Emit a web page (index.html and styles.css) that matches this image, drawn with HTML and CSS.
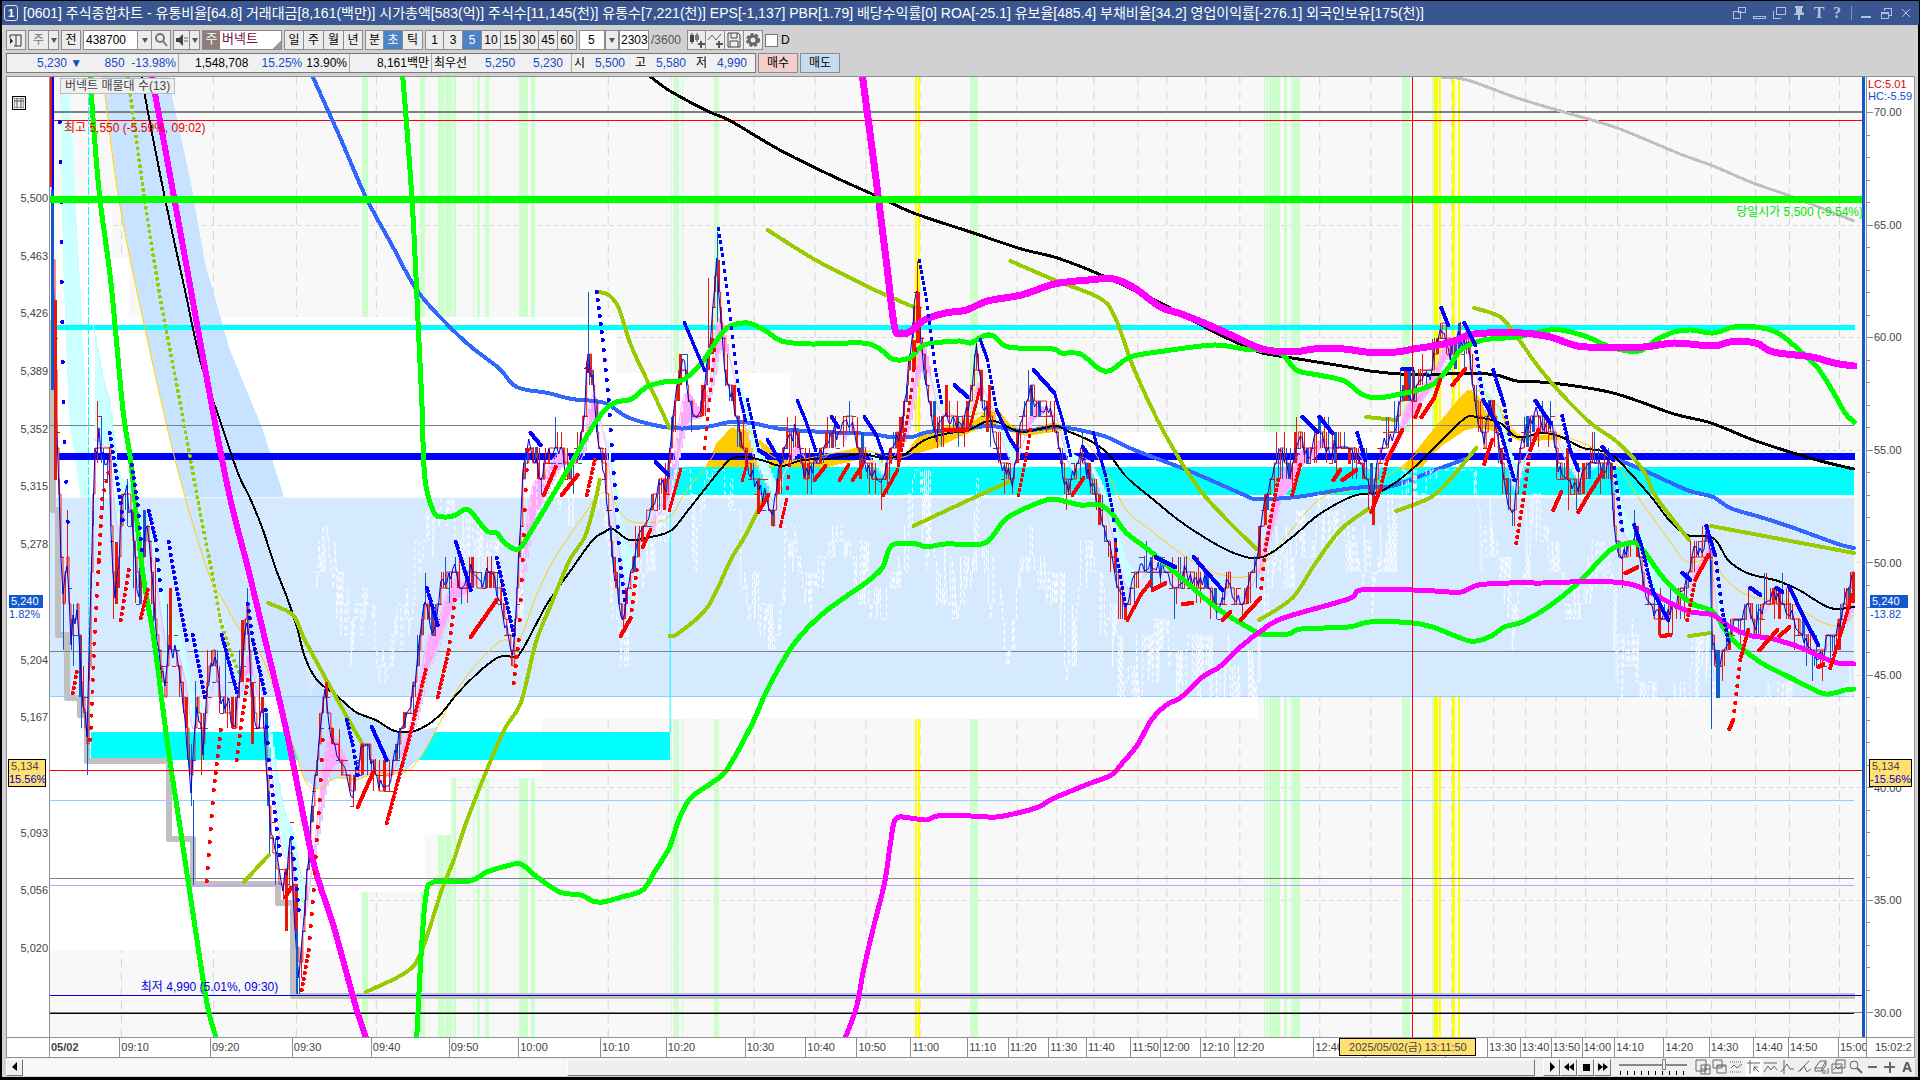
FILE: index.html
```
<!DOCTYPE html>
<html lang="ko">
<head>
    <meta charset="UTF-8">
    <meta name="viewport" content="width=device-width, initial-scale=1.0">
    <title>[0601] 주식종합차트</title>
    <link rel="stylesheet" href="styles.css">
</head>
<body>
    <header class="titlebar">
        <span class="win-no">1</span>
        <h1>[0601] 주식종합차트 - 유통비율[64.8] 거래대금[8,161(백만)] 시가총액[583(억)] 주식수[11,145(천)] 유통수[7,221(천)] EPS[-1,137] PBR[1.79] 배당수익률[0] ROA[-25.1] 유보율[485.4] 부채비율[34.2] 영업이익률[-276.1] 외국인보유[175(천)]</h1>
        <div class="win-buttons">
            <button type="button" aria-label="분리"><svg width="14" height="14"><path d="M1 5h7v7H1zM6 1h7v5H6z"/></svg></button>
            <button type="button" aria-label="접기"><svg width="14" height="14"><path d="M1 10h12v2H1z"/></svg></button>
            <button type="button" aria-label="복사"><svg width="14" height="14"><path d="M4 1h9v7H4zM1 5v7h8"/></svg></button>
            <button type="button" aria-label="고정"><svg width="14" height="14"><path class="solid" d="M3 0h8v2H10v4l2 2v1H2V8l2-2V2H3zM6 9h2v5H6z"/></svg></button>
            <button type="button" class="letter">T</button>
            <button type="button" class="letter">?</button>
            <i class="bar"></i>
            <button type="button" aria-label="최소화"><svg width="14" height="14"><path d="M2 10h10M2 11h10"/></svg></button>
            <button type="button" aria-label="이전 크기"><svg width="14" height="14"><path d="M2 6h7v6H2zM5 5V2h7v7H9M2 7h7"/></svg></button>
            <button type="button" aria-label="닫기"><svg width="14" height="14"><path d="M3 3l8 8M11 3l-8 8"/></svg></button>
        </div>
    </header>

    <main class="window">
        <div class="toolbar">
            <button type="button" class="btn w20" aria-label="패널"><svg width="14" height="14"><path d="M1 5l3 3-3 3z" fill="#222"/><path d="M1 2h11v11H5M7 2v11M1 2v3" fill="none" stroke="#333"/></svg></button>
            <div class="group">
                <button type="button" class="btn w21 gray">주</button>
                <button type="button" class="btn w10 arrow" aria-label="종류"></button>
            </div>
            <button type="button" class="btn w20">전</button>
            <div class="group">
                <input class="code" type="text" value="438700" aria-label="종목코드">
                <button type="button" class="btn w14 arrow" aria-label="최근 종목"></button>
                <button type="button" class="btn w19" aria-label="검색"><svg width="14" height="14"><circle cx="6" cy="5" r="4" fill="none" stroke="#777" stroke-width="2"/><path d="M9 8l4 5" stroke="#777" stroke-width="2"/></svg></button>
            </div>
            <div class="group">
                <button type="button" class="btn w17" aria-label="소리"><svg width="14" height="14"><path d="M1 5h3l4-4v12L4 9H1z" fill="#444"/><path d="M10 4v6M12 4v6" stroke="#666" stroke-dasharray="2 1"/></svg></button>
                <button type="button" class="btn w10 arrow" aria-label="소리 설정"></button>
            </div>
            <div class="stock"><b>주</b><span>버넥트</span></div>
            <div class="group">
                <button type="button" class="btn w20">일</button>
                <button type="button" class="btn w20">주</button>
                <button type="button" class="btn w20">월</button>
                <button type="button" class="btn w19">년</button>
            </div>
            <div class="group">
                <button type="button" class="btn w19">분</button>
                <button type="button" class="btn w19 on">초</button>
                <button type="button" class="btn w20">틱</button>
            </div>
            <div class="group">
                <button type="button" class="btn w19">1</button>
                <button type="button" class="btn w19">3</button>
                <button type="button" class="btn w19 on">5</button>
                <button type="button" class="btn w19">10</button>
                <button type="button" class="btn w19">15</button>
                <button type="button" class="btn w19">30</button>
                <button type="button" class="btn w19">45</button>
                <button type="button" class="btn w19">60</button>
            </div>
            <div class="group unit-box">
                <select class="unit" aria-label="주기"><option>5</option></select>
                <span class="btn w14 arrow"></span>
            </div>
            <input class="count" type="text" value="2303" aria-label="봉 개수">
            <span class="total">/3600</span>
            <div class="group">
                <button type="button" class="btn w19" aria-label="지표 추가"><svg width="16" height="16"><path d="M3 1v11M8 1v9" stroke="#444"/><path d="M1 3h4v7H1z" fill="#444"/><path d="M6 3h4v5H6z" fill="#777"/><path d="M12 9v7M9 12h7" stroke="#555" stroke-width="2"/></svg></button>
                <button type="button" class="btn w19" aria-label="선 추가"><svg width="16" height="16"><path d="M1 8l4-5 4 5 5-6" fill="none" stroke="#666"/><path d="M12 9v7M9 12h7" stroke="#555" stroke-width="2"/></svg></button>
                <button type="button" class="btn w19" aria-label="저장"><svg width="16" height="16"><path d="M2 1h10l2 2v12H2zM5 1v5h6V1M4 15V9h8v6" fill="none" stroke="#444"/></svg></button>
                <button type="button" class="btn w19" aria-label="설정"><svg width="16" height="16"><circle cx="8" cy="8" r="4" fill="none" stroke="#666" stroke-width="3"/><circle cx="8" cy="8" r="6" fill="none" stroke="#666" stroke-width="2" stroke-dasharray="3 2"/></svg></button>
            </div>
            <label class="chk"><input type="checkbox">D</label>
        </div>

        <div class="quote">
            <dl class="quote-box">
                <dd class="blue c1"><span>5,230 ▼</span><span>850&nbsp; -13.98%</span></dd>
                <dd class="c2"><span>1,548,708</span><span class="pair"><span class="blue">15.25%</span><span>13.90%</span></span></dd>
                <dd class="c3">8,161백만</dd>
                <dd class="c4"><span>최우선</span><span class="blue">5,250</span><span class="blue">5,230</span></dd>
                <dd class="c5"><span>시</span><span class="blue">5,500</span><span>고</span><span class="blue">5,580</span><span>저</span><span class="blue">4,990</span></dd>
            </dl>
            <button type="button" class="order buy">매수</button>
            <button type="button" class="order sell">매도</button>
        </div>

        <section class="chart">
            <div class="axis-left">
                <button type="button" class="grid-btn" aria-label="표"><svg width="10" height="10"><path d="M0 0h10v10H0zM3 0v10M7 0v10M0 3h10" fill="none" stroke="#555"/></svg></button>
                <ol id="prices"></ol>
                <div class="tag now"><b>5,240</b><span>1.82%</span></div>
                <div class="tag cross"><b>5,134</b><span>15.56%</span></div>
            </div>

            <div class="plot">
                <svg id="plot" viewBox="49 77 1817 960" preserveAspectRatio="none"></svg>
                <span class="note legend">버넥트 매물대 수(13)</span>
                <span class="note high">최고 5,550 (-5.59%, 09:02)</span>
                <span class="note open">당일시가 5,500 (-9.54%)</span>
                <span class="note low">최저 4,990 (5.01%, 09:30)</span>
            </div>

            <div class="axis-right">
                <svg id="ticks" viewBox="0 77 8 960" preserveAspectRatio="none"></svg>
                <div class="lc">LC:5.01</div>
                <div class="hc">HC:-5.59</div>
                <ol>
                    <li>70.00</li><li>65.00</li><li>60.00</li><li>55.00</li><li>50.00</li><li>45.00</li><li>40.00</li><li>35.00</li><li>30.00</li>
                </ol>
                <div class="tag now"><b>5,240</b><span>-13.82</span></div>
                <div class="tag cross"><b>5,134</b><span>-15.56%</span></div>
            </div>

            <div class="corner"></div>
            <div class="axis-time">
                <div id="times"></div>
                <span class="time-tag">2025/05/02(금) 13:11:50</span>
            </div>
            <div class="corner last">15:02:2</div>
        </section>

        <footer class="bottom">
            <button type="button" class="sbtn" aria-label="왼쪽"><svg width="10" height="10"><path d="M7 0v9L2 5z"/></svg></button>
            <div class="track"><div class="thumb"></div></div>
            <div class="group">
                <button type="button" class="sbtn" aria-label="재생"><svg width="10" height="10"><path d="M3 0l5 5-5 5z"/></svg></button>
                <button type="button" class="sbtn" aria-label="뒤로"><svg width="10" height="10"><path d="M5 1v8L0 5zM10 1v8L5 5z"/></svg></button>
                <button type="button" class="sbtn" aria-label="정지"><svg width="10" height="10"><path d="M2 2h7v7H2z"/></svg></button>
                <button type="button" class="sbtn" aria-label="앞으로"><svg width="10" height="10"><path d="M0 1v8l5-4zM5 1v8l5-4z"/></svg></button>
            </div>
            <div class="speed">
                <input type="range" min="0" max="9" value="6" aria-label="속도">
                <svg width="68" height="4"><path d="M1 2h67" stroke="#000" stroke-width="4" stroke-dasharray="1 6"/></svg>
            </div>
            <div class="tools">
                <button type="button" aria-label="창 추가"><svg><path d="M1 1h10v11H1z"/><path d="M6 6h9v9H6zM10 6v9M6 10h9"/></svg></button>
                <button type="button" aria-label="창 겹침"><svg><path d="M1 1h9v8H1zM5 6h9v8H5zM5 7h9"/></svg></button>
                <button type="button" aria-label="자동 추세"><svg><path d="M1 3h12M1 13h12" stroke-dasharray="1 1"/><path d="M2 9l3-3 3 3 5-4"/></svg></button>
                <button type="button" class="on" aria-label="십자선"><svg><path d="M1 4h13M4 1v14M8 8l5 5M8 8v4M8 8h4"/></svg></button>
                <button type="button" aria-label="수평선"><svg><path d="M1 4h13M1 13l4-6 3 4 3-4 3 4"/></svg></button>
                <button type="button" aria-label="수직선"><svg><path d="M4 1v14M1 13l6-8 3 5 4 0"/></svg></button>
                <button type="button" aria-label="추세선"><svg><path d="M1 13L12 2M3 12l4-5 3 6 4-3"/></svg></button>
                <button type="button" aria-label="모두 지우기"><svg><path d="M1 9l5-7h6l-4 7zM1 9v3h7V9M8 12l4-6V2M9 15v-4M11 15v-4M14 15V9"/></svg></button>
                <button type="button" aria-label="차트 복사"><svg><path d="M5 1h9v8H5zM1 5h10v9H1zM2 11l3-3 2 2 3-3"/></svg></button>
                <button type="button" aria-label="확대 영역"><svg><circle cx="6" cy="6" r="4"/><path d="M9 9l5 5" stroke-width="2"/></svg></button>
                <button type="button" aria-label="축소"><svg><path d="M3 8h9" stroke-width="2"/></svg></button>
                <button type="button" aria-label="확대"><svg><path d="M2 8h11M8 3v11" stroke-width="2"/></svg></button>
                <button type="button" class="letter">A</button>
            </div>
        </footer>
    </main>

    <script src="chart.js"></script>
</body>
</html>
```
FILE: styles.css
```
* {
    box-sizing: border-box;
}

body {
    display: flex;
    flex-direction: column;
    height: 100vh;
    margin: 0;
    padding: 1px 1px 3px 2px;
    background-color: #000;
    color: #000;
    font-family: "Liberation Sans", "Noto Sans CJK KR", sans-serif;
    font-size: 11px;
    line-height: 16px;
    overflow: hidden;
}

button, input, select {
    margin: 0;
    padding: 0;
    font: inherit;
    color: inherit;
    border-radius: 0;
}

ol, dl, dd {
    margin: 0;
    padding: 0;
    list-style: none;
}

.titlebar {
    display: flex;
    flex: none;
    align-items: center;
    gap: 5px;
    height: 24px;
    padding: 0 4px 0 2px;
    background-color: #3a5691;
    color: #fff;
}

.titlebar h1 {
    flex: 1;
    margin: 0;
    font-size: 14px;
    font-weight: normal;
    line-height: 20px;
    white-space: nowrap;
    overflow: hidden;
}

.win-no {
    width: 14px;
    height: 16px;
    border: 1px solid #dfe6f5;
    border-radius: 3px;
    font-weight: bold;
    line-height: 14px;
    text-align: center;
}

.win-buttons {
    display: flex;
    align-items: center;
    gap: 4px;
}

.win-buttons button {
    width: 16px;
    height: 16px;
    border: 0;
    background: none;
    color: #b4c1de;
}

.win-buttons svg {
    display: block;
    fill: none;
    stroke: #b4c1de;
    shape-rendering: crispEdges;
}

.win-buttons .solid {
    fill: #b4c1de;
    stroke: none;
}

.win-buttons .letter {
    width: 14px;
    font-family: "Liberation Serif", serif;
    font-size: 16px;
    font-weight: bold;
}

.win-buttons .bar {
    width: 1px;
    height: 14px;
    margin: 0 3px;
    background-color: #8794ad;
}

.window {
    display: flex;
    flex: 1;
    flex-direction: column;
    min-height: 0;
    margin-right: 1px;
    padding: 5px 3px 1px 4px;
    background-color: #d1d1d1;
}

.toolbar, .quote {
    display: flex;
    flex: none;
    align-items: center;
    gap: 2px;
    height: 20px;
    font-size: 12px;
}

.quote {
    margin: 3px 0;
}

.group {
    display: flex;
}

.btn {
    display: flex;
    align-items: center;
    justify-content: center;
    height: 20px;
    border: 1px solid #8c8c8c;
    background-color: #ececec;
}

.group .btn + .btn, .group .code + .btn {
    border-left: 0;
}

.w10 { width: 10px; }
.w14 { width: 14px; }
.w17 { width: 17px; }
.w19 { width: 19px; }
.w20 { width: 20px; }
.w21 { width: 21px; }

.gray {
    color: #777;
}

.on {
    background-color: #4d82c6;
    color: #fff;
}

.arrow::after {
    content: "";
    border: 3px solid transparent;
    border-top: 5px solid #555;
    border-bottom: 0;
}

.code, .count {
    width: 55px;
    height: 20px;
    padding-left: 2px;
    border: 1px solid #8c8c8c;
    background-color: #fff;
}

.count {
    width: 30px;
    padding-left: 1px;
    margin-left: -2px;
}

.stock {
    display: flex;
    width: 80px;
    height: 20px;
    border: 1px solid #8c8c8c;
    background: linear-gradient(135deg, #fff 91%, #999 91%);
    color: #7b0a3c;
    font-size: 13px;
}

.stock b {
    width: 17px;
    margin-right: 2px;
    background-color: #8b7d77;
    color: #fff;
    font-weight: normal;
    text-align: center;
}

.unit {
    width: 26px;
    height: 20px;
    padding-left: 8px;
    border: 1px solid #8c8c8c;
    background-color: #fff;
    appearance: none;
}

.total {
    width: 34px;
    color: #555;
}

.chk {
    display: flex;
    align-items: center;
    gap: 3px;
}

.chk input {
    width: 13px;
    height: 13px;
    border: 1px solid #777;
    background-color: #fff;
    appearance: none;
}

.quote-box {
    display: flex;
    width: 750px;
    height: 20px;
    border: 1px solid #777;
    background-color: #f0f0f0;
    white-space: nowrap;
}

.quote-box dd {
    display: flex;
    justify-content: space-between;
    padding: 1px 2px;
    border-left: 1px solid #a8a8a8;
}

.quote-box .c1 {
    width: 171px;
    padding-left: 30px;
    border-left: 0;
}

.quote-box .c2 {
    width: 171px;
    padding-left: 16px;
}

.pair {
    display: flex;
    gap: 4px;
}

.quote-box .c3 {
    width: 82px;
    justify-content: flex-end;
}

.quote-box .c4 {
    width: 140px;
    padding-right: 8px;
}

.quote-box .c5 {
    flex: 1;
    padding-right: 8px;
}

.blue {
    color: #1448c8;
}

.order {
    width: 40px;
    height: 20px;
    border: 1px solid #8c8c8c;
}

.buy {
    background-color: #f5cfcb;
}

.sell {
    background-color: #c5dcf3;
}

.chart {
    display: grid;
    flex: 1;
    grid-template-columns: 43px 1fr 48px;
    grid-template-rows: 1fr 20px;
    min-height: 0;
    border: 1px solid #909090;
    background-color: #fff;
    color: #444;
}

.axis-left, .axis-right, .plot, .axis-time {
    position: relative;
    min-width: 0;
    min-height: 0;
}

.axis-left {
    display: flex;
    border-right: 1px solid #909090;
}

.axis-left ol {
    display: flex;
    flex: 1;
    flex-direction: column;
    padding: 92px 1px 60px 0;
    text-align: right;
}

.axis-left li {
    display: flex;
    flex: 1;
    align-items: center;
    justify-content: flex-end;
}

.grid-btn {
    position: absolute;
    top: 19px;
    left: 5px;
    display: flex;
    align-items: center;
    justify-content: center;
    width: 14px;
    height: 14px;
    border: 1px solid #000;
    background-color: #eee;
}

.plot {
    background-color: #f8f8f8;
    overflow: hidden;
}

.plot svg {
    display: block;
    width: 100%;
    height: 100%;
    shape-rendering: crispEdges;
}

.note {
    position: absolute;
    font-size: 12px;
    white-space: nowrap;
}

.legend {
    top: 1px;
    left: 10px;
    padding: 0 4px;
    border: 1px solid #bbb;
    background-color: #f0f0f0;
    line-height: 14px;
}

.high {
    top: 43px;
    left: 14px;
    color: #e00000;
}

.open {
    top: 127px;
    right: 3px;
    color: #00e600;
}

.low {
    top: 94%;
    left: 5%;
    color: #0000e0;
}

.axis-right {
    display: flex;
    flex-direction: column;
    border-left: 1px solid #909090;
}

.axis-right svg {
    position: absolute;
    top: 0;
    left: 0;
    width: 8px;
    height: 100%;
    shape-rendering: crispEdges;
}

.axis-right ol {
    display: flex;
    flex: 1;
    flex-direction: column;
    justify-content: space-between;
    padding: 27px 0 16px 7px;
}

.lc, .hc {
    position: absolute;
    left: 1px;
    color: #e00000;
    line-height: 12px;
}

.lc {
    top: 1px;
}

.hc {
    top: 13px;
    color: #1448c8;
}

.tag {
    position: absolute;
    left: 2px;
    display: flex;
    flex-direction: column;
    width: 38px;
    line-height: 13px;
}

.tag b {
    padding: 0 2px;
    font-weight: normal;
}

.axis-left .now b {
    width: 34px;
}

.now {
    top: 54%;
    color: #1448c8;
}

.axis-right .tag {
    left: 3px;
}

.now b {
    background-color: #1159cc;
    color: #fff;
}

.cross {
    top: 71%;
    left: 1px;
    border: 1px solid #000;
    background-color: #ffe070;
}

.axis-right .cross {
    left: 2px;
    width: 43px;
}

.cross span {
    color: #0000cc;
}

.corner, .axis-time {
    border-top: 1px solid #909090;
    line-height: 18px;
}

.corner {
    border-right: 1px solid #909090;
}

.corner.last {
    padding-left: 8px;
    border-right: 0;
    border-left: 1px solid #909090;
}

#times {
    display: flex;
    height: 100%;
}

#times span {
    min-width: 0;
    padding-left: 1px;
    border-left: 1px solid #909090;
    white-space: nowrap;
    overflow: hidden;
}

#times span:first-child {
    border-left: 0;
    font-weight: bold;
}

.time-tag {
    position: absolute;
    top: 0;
    left: 71%;
    width: 137px;
    height: 18px;
    border: 1px solid #000;
    background-color: #ffe070;
    line-height: 16px;
    text-align: center;
    white-space: nowrap;
}

.bottom {
    display: flex;
    flex: none;
    align-items: center;
    gap: 8px;
    height: 18px;
    background-color: #f0f0f0;
}

.sbtn {
    display: flex;
    align-items: center;
    justify-content: center;
    width: 17px;
    height: 17px;
    border: 1px solid;
    border-color: #fff #777 #777 #fff;
    background-color: #f0f0f0;
}

.track {
    display: flex;
    flex: 1;
    height: 17px;
    margin-left: -8px;
    background-color: #f7f7f7;
}

.thumb {
    width: 64%;
    margin-left: auto;
    border: 1px solid;
    border-color: #fff #777 #777 #fff;
    background-color: #efefef;
}

.speed {
    display: flex;
    flex-direction: column;
    gap: 1px;
    width: 68px;
}

.speed input {
    width: 68px;
    height: 11px;
    background: linear-gradient(#888, #888) no-repeat center / 100% 2px;
    appearance: none;
}

.speed input::-webkit-slider-thumb {
    width: 4px;
    height: 11px;
    border: 1px solid #888;
    background-color: #eee;
    appearance: none;
}

.tools {
    display: flex;
    gap: 1px;
}

.tools button {
    width: 16px;
    height: 17px;
    border: 0;
    background: none;
}

.tools .on {
    background-color: #fff;
}

.tools .letter {
    color: #555;
    font-weight: bold;
    font-size: 14px;
}

.tools svg {
    display: block;
    width: 16px;
    height: 16px;
    fill: none;
    stroke: #666;
}
```
FILE: chart.js
```
const plot = document.getElementById('plot');
let out = '';

function rect(x, y, w, h, fill) {
    out += `<rect x="${x}" y="${y}" width="${w}" height="${h}" fill="${fill}"/>`;
}

function line(points, color, width, extra = '') {
    out += `<polyline points="${points}" fill="none" stroke="${color}" stroke-width="${width}" stroke-linejoin="round" ${extra}/>`;
}

function area(points, fill) {
    out += `<polygon points="${points}" fill="${fill}"/>`;
}

// 점들을 지나는 부드러운 곡선
function curve(points, color, width) {
    const p = points.split(' ').map(s => s.split(',').map(Number));
    let d = `M${p[0]}`;
    for (let i = 0; i < p.length - 1; i++) {
        const a = p[i - 1] || p[i], b = p[i], c = p[i + 1], e = p[i + 2] || c;
        d += `C${b[0] + (c[0] - a[0]) / 6},${b[1] + (c[1] - a[1]) / 6} ${c[0] - (e[0] - b[0]) / 6},${c[1] - (e[1] - b[1]) / 6} ${c}`;
    }
    out += `<path d="${d}" fill="none" stroke="${color}" stroke-width="${width}" stroke-linecap="round" stroke-linejoin="round"/>`;
}

// x 간격이 일정한 점 찍기
function dots(points, color, step) {
    const p = points.split(' ').map(s => s.split(',').map(Number));
    let i = 0;
    for (let x = p[0][0]; ; x += step) {
        while (i < p.length - 2 && (x - p[i + 1][0]) * Math.sign(p[i + 1][0] - p[i][0] || 1) > 0) i++;
        const [x0, y0] = p[i], [x1, y1] = p[i + 1];
        if (x > p[p.length - 1][0]) break;
        const y = y0 + (y1 - y0) * (x - x0) / (x1 - x0);
        out += `<circle cx="${Math.round(x)}" cy="${Math.round(y)}" r="2" fill="${color}"/>`;
    }
}

// 시간축
const times = [
    ['05/02', 49], ['09:10', 120], ['09:20', 212], ['09:30', 295], ['09:40', 375], ['09:50', 454],
    ['10:00', 524], ['10:10', 607], ['10:20', 673], ['10:30', 753], ['10:40', 814], ['10:50', 865],
    ['11:00', 919], ['11:10', 976], ['11:20', 1016], ['11:30', 1056], ['11:40', 1093], ['11:50', 1137],
    ['12:00', 1166], ['12:10', 1205], ['12:20', 1239], ['12:40', 1319], ['', 1370], ['', 1451],
    ['13:30', 1493], ['13:40', 1525], ['13:50', 1555], ['14:00', 1585], ['14:10', 1617], ['14:20', 1666],
    ['14:30', 1711], ['14:40', 1755], ['14:50', 1789], ['15:00', 1839]
];
document.getElementById('times').innerHTML = times.map(([t, x], i) => {
    const next = i + 1 < times.length ? times[i + 1][1] : 1866;
    return `<span style="flex: ${next - x} 0 0px">${t}</span>`;
}).join('');

// 가격축
document.getElementById('prices').innerHTML =
    ['5,500', '5,463', '5,426', '5,389', '5,352', '5,315', '5,278', '', '5,204', '5,167', '', '5,093', '5,056', '5,020']
        .map(p => `<li>${p}</li>`).join('');

let ticks = '';
for (let i = 0; i <= 40; i++) {
    const y = 112.5 + i * 22.5;
    ticks += `<path d="M0 ${y}h${i % 5 ? 3 : 6}" stroke="#888"/>`;
}
document.getElementById('ticks').innerHTML = ticks;

// 격자
times.slice(1).forEach(([, x]) => line(`${x + .5},77 ${x + .5},1037`, '#d4d4d4', 1, 'stroke-dasharray="8 6"'));
for (let y = 225; y < 1013; y += 112.5) {
    line(`49,${Math.floor(y) + .5} 1860,${Math.floor(y) + .5}`, '#d4d4d4', 1, 'stroke-dasharray="4 4"');
}

// 신호 구간
[[361, 6], [419, 5], [437, 6], [444, 7], [452, 3], [472, 1], [476, 3], [484, 4], [518, 9], [530, 4],
 [670, 1], [673, 5], [681, 1], [713, 5], [970, 8], [1264, 1], [1266, 2], [1269, 11], [1284, 3],
 [1291, 9], [1402, 8], [1432, 2]].forEach(([x, w]) => rect(x, 77, w, 960, '#ccffcc'));
[[914, 2], [917, 2], [1434, 4], [1439, 2], [1452, 3], [1458, 2]].forEach(([x, w]) => rect(x, 77, w, 960, '#ffff00'));

// 매물대
[[62, 203, 55], [79, 258, 59], [566, 317, 56], [741, 373, 59], [1488, 432, 21], [1805, 453, 44],
 [1209, 697, 22], [492, 719, 59], [401, 778, 57], [375, 835, 57], [310, 892, 58]]
    .forEach(([w, y, h]) => rect(49, y, w, h, '#ffffff'));

// 구름대
area('59,77 67,77 70,110 74,190 80,300 85,400 88,497 80,497 68,420 62,260', '#ccffff');
area('102,77 118,200 145,333 175,463 206,569 239,630 261,657 278,703 294,750 304,780 316,789 335,778 355,780 375,773 402,773 420,757 437,727 414,731 394,731 375,720 355,712 335,695 316,680 304,657 290,560 282,493 261,427 229,350 204,263 190,183 167,77', '#c8e3ff');
rect(49, 497, 1805, 199, '#d6eaff');
rect(49, 497, 1805, 1, '#f4f8fc');
area('206,569 239,630 261,657 276,697 310,697 296,627 286,597 275,569 249,498 185,498', '#cfe6ff');
rect(90, 732, 579, 28, '#00ffff');
rect(669, 467, 1185, 28, '#00ffff');
area('278,703 294,750 304,780 316,789 335,778 355,780 375,773 402,773 420,757 437,727 414,731 394,731 375,720 355,712 335,695 316,680 310,697 276,697', '#c8e3ff');
area('705,467 716,443 730,428 747,430 768,447 781,460 830,454 855,448 882,458 882,464 861,459 827,467', '#ffcc00');
area('903,458 911,445 920,434 949,425 975,420 987,410 1000,412 1010,425 1025,430 1054,422 1067,430 1025,436 987,425 966,434 935,448', '#ffcc00');
area('1400,470 1435,427 1467,390 1476,393 1483,403 1500,408 1510,428 1520,436 1561,434 1561,440 1520,441 1500,432 1476,428 1465,430 1440,447 1422,467', '#ffcc00');

// 저가 계단선
line('52,320 52,510 57,510 57,635 66,635 66,698 79,698 79,715 86,715 86,761 168,761 168,839 192,839 192,884 277,884 277,903 292,903 292,996 1855,996', '#c0c0c0', 6);

// 수평 기준선
rect(49, 111, 1814, 2, '#808080');
rect(49, 120, 1814, 1, '#ff0000');
rect(49, 425, 1805, 1, '#808080');
rect(49, 651, 1805, 1, '#808080');
rect(49, 696, 1805, 1, '#99ccff');
rect(49, 800, 1805, 1, '#99ccff');
rect(49, 878, 1805, 1, '#808080');
rect(49, 885, 1805, 1, '#cc99ff');
rect(49, 995, 1814, 1, '#0000e0');
rect(49, 1012, 1814, 1, '#808080');
rect(49, 1013, 1805, 1, '#000000');
line('87.5,77 87.5,760', '#00ffff', 1, 'stroke-dasharray="8 2"');
line('669.5,497 669.5,732', '#00ffff', 1);
rect(54, 325, 1801, 5, '#00ffff');
rect(58, 453, 1797, 7, '#0000ff');

// 주가 흐름 (x, y)
const price = [
    [50, 80], [51, 200], [53, 330], [56, 440], [58, 500], [60, 560], [62, 600], [66, 560], [70, 640], [76, 600],
    [80, 680], [86, 745], [89, 620], [92, 500], [94, 450], [98, 440], [102, 455], [108, 445], [110, 520], [113, 600],
    [118, 560], [121, 500], [126, 490], [130, 510], [134, 560], [138, 590], [143, 540], [147, 520], [151, 590],
    [158, 650], [164, 690], [168, 640], [176, 660], [184, 710], [190, 780], [196, 700], [202, 750], [206, 680],
    [212, 650], [218, 690], [226, 710], [234, 725], [240, 660], [246, 610], [250, 690], [256, 730], [263, 720],
    [267, 800], [272, 850], [280, 890], [285, 870], [290, 850], [295, 940], [299, 970], [304, 900], [312, 800],
    [318, 740], [323, 690], [330, 730], [340, 765], [352, 790], [360, 750], [368, 745], [378, 785], [388, 780],
    [400, 730], [410, 700], [420, 640], [424, 600], [432, 630], [440, 590], [452, 565], [460, 590], [470, 570],
    [480, 590], [490, 570], [500, 600], [512, 660], [518, 560], [522, 480], [528, 445], [540, 480], [548, 450],
    [560, 445], [568, 475], [578, 450], [584, 410], [587, 350], [592, 380], [597, 440], [604, 470], [608, 520],
    [612, 560], [618, 600], [622, 620], [630, 570], [640, 535], [650, 505], [656, 495], [660, 475], [666, 490],
    [670, 440], [677, 380], [683, 360], [688, 400], [696, 420], [704, 390], [710, 340], [716, 255], [719, 310],
    [724, 370], [732, 400], [740, 440], [750, 475], [757, 485], [766, 500], [772, 520], [776, 485], [785, 440],
    [795, 430], [803, 475], [815, 465], [825, 440], [840, 430], [850, 420], [860, 455], [870, 470], [880, 485],
    [890, 450], [900, 430], [908, 370], [914, 310], [917, 280], [920, 340], [928, 400], [936, 435], [946, 410],
    [960, 430], [970, 400], [976, 350], [982, 400], [990, 420], [1000, 460], [1012, 480], [1020, 430], [1030, 385],
    [1036, 405], [1048, 410], [1056, 430], [1062, 470], [1068, 490], [1080, 455], [1090, 480], [1096, 500],
    [1104, 530], [1110, 550], [1118, 590], [1125, 610], [1135, 575], [1150, 565], [1165, 570], [1175, 590],
    [1186, 570], [1195, 585], [1205, 580], [1215, 605], [1222, 605], [1228, 575], [1235, 600], [1242, 605],
    [1250, 575], [1256, 560], [1262, 520], [1270, 480], [1280, 450], [1290, 475], [1298, 435], [1308, 455],
    [1318, 430], [1330, 450], [1345, 445], [1355, 455], [1365, 475], [1372, 495], [1380, 450], [1395, 430],
    [1400, 400], [1405, 385], [1412, 400], [1420, 375], [1430, 375], [1438, 340], [1443, 325], [1450, 350],
    [1460, 335], [1468, 345], [1474, 400], [1484, 440], [1490, 400], [1496, 430], [1505, 490], [1513, 520],
    [1520, 450], [1530, 420], [1535, 410], [1545, 430], [1552, 425], [1558, 465], [1568, 480], [1578, 490],
    [1590, 460], [1600, 465], [1610, 465], [1615, 540], [1622, 560], [1635, 535], [1645, 590], [1655, 615],
    [1665, 620], [1675, 600], [1685, 590], [1693, 550], [1700, 555], [1706, 535], [1711, 545], [1712, 640],
    [1718, 670], [1724, 650], [1734, 620], [1742, 620], [1749, 600], [1754, 630], [1765, 600], [1775, 595],
    [1785, 605], [1800, 630], [1812, 650], [1822, 655], [1828, 635], [1835, 640], [1843, 605], [1853, 575]
];

function priceAt(x) {
    for (let i = 1; i < price.length; i++) {
        if (x <= price[i][0]) {
            const [x0, y0] = price[i - 1];
            const [x1, y1] = price[i];
            return y0 + (y1 - y0) * (x - x0) / (x1 - x0);
        }
    }
    return 575;
}

let seed = 7;
function rnd() {
    seed = (seed * 16807) % 2147483647;
    return seed / 2147483647;
}

const TICK = 15.6;
const snap = y => Math.round(198 + Math.round((y - 198) / TICK) * TICK);

// 단기 이평 리본
const fast = [], slow = [];
let f = 420, s = 300;
for (let x = 92; x < 1854; x += 2) {
    f += (priceAt(x) - f) * .22;
    s += (priceAt(x) - s) * .11;
    fast.push([x, Math.round(f)]);
    slow.push([x, Math.round(s)]);
}
for (let i = 1; i < fast.length; i++) {
    const gap = fast[i][1] - slow[i][1];
    if (Math.abs(gap) > 7) {
        rect(fast[i][0], Math.min(fast[i][1], slow[i][1]), 2, Math.abs(gap), gap < 0 ? '#ffaaff' : '#ccffff');
    }
}
line(fast.join(' '), '#ffaaff', 1);
line(slow.join(' '), '#c0f4ff', 1);

// 중기선 / 장기선
curve('102,77 118,200 145,333 175,463 206,569 222,600 239,630 261,657 278,703 294,750 304,780 316,789 335,778 355,780 375,773 402,773 420,757 437,727 461,683 498,642 518,640 535,597 553,560 580,520 598,495 610,495 621,515 638,523 669,517 684,493 705,467 730,430 747,430 781,460 855,450 903,457 935,434 987,412 1021,431 1057,424 1088,445 1109,478 1126,510 1150,530 1190,560 1222,575 1250,575 1275,550 1318,500 1353,490 1380,480 1420,450 1467,392 1500,408 1520,436 1561,436 1610,458 1640,500 1669,540 1687,562 1711,560 1728,582 1752,597 1787,602 1821,622 1840,625 1854,615', '#ffcc00', 1);
curve('312,77 339,137 365,197 390,243 416,290 447,325 473,349 498,368 516,387 547,393 571,399 604,403 629,418 671,428 705,427 730,422 751,423 781,429 823,432 869,434 890,437 911,437 928,432 962,429 991,426 1021,431 1057,427 1088,432 1109,438 1134,450 1189,471 1244,495 1257,499 1296,497 1353,488 1392,486 1435,470 1465,459', '#3366ff', 4);
curve('1613,458 1643,470 1687,490 1713,497 1730,508 1760,517 1791,527 1838,544 1854,548', '#3366ff', 4);

// 후행 점선
let lag = '', prev = 0;
for (let x = 312; x < 1854; x += 2) {
    const shift = x < 520 ? -190 + (x - 312) * .9 : x < 690 ? 30 : x < 900 ? 120 : x < 1080 ? 160 : x < 1480 ? 90 : 110;
    const y = Math.min(706, Math.max(470, snap(priceAt(x) + shift + (rnd() - .5) * 70)));
    if (prev) lag += `${x},${prev} `;
    lag += `${x},${y} `;
    prev = rnd() < .5 ? y : prev || y;
}
line(lag, '#ffffff', 1, 'stroke-dasharray="5 3"');

curve('141,77 147,112 165,203 184,290 200,363 220,423 237,473 249,498 261,527 275,569 286,597 296,627 304,657 316,680 335,695 355,712 375,720 394,731 414,731 437,717 457,693 477,673 496,658 506,656 518,655 535,625 547,603 571,569 592,540 604,532 612,529 629,540 650,537 671,530 690,507 709,483 722,467 732,458 747,457 764,461 781,466 802,460 827,459 861,454 882,458 903,455 924,440 949,433 966,431 987,421 1000,423 1021,432 1054,426 1067,431 1092,442 1109,455 1126,477 1151,498 1185,525 1231,552 1262,557 1292,537 1318,515 1353,496 1379,492 1400,479 1422,460 1444,438 1465,418 1476,417 1500,423 1517,437 1543,433 1561,437 1583,448 1609,453 1630,473 1652,498 1669,520 1687,535 1713,538 1728,560 1747,573 1778,581 1799,590 1830,608 1854,607', '#000000', 2);
curve('1442,77 1467,80 1517,98 1567,113 1617,128 1680,154 1713,166 1753,183 1790,196 1854,221', '#c0c0c0', 3);
curve('650,77 671,92 709,112 730,121 781,151 836,178 876,196 913,213 970,232 1021,249 1057,258 1103,276 1164,305 1210,330 1244,346 1262,353 1292,358 1348,367 1370,371 1400,374 1431,375 1465,373 1496,375 1517,381 1552,383 1613,393 1674,414 1711,423 1756,441 1817,460 1854,469', '#000000', 3);

// 채널 하단/상단
[
    '243,882 268,855',
    '267,603 292,615 304,640 335,697 361,743',
    '365,992 404,973 420,953 441,890 453,860 469,813 502,733 520,703 535,643 551,603 569,560 584,537 594,503 599,480',
    '598,292 608,295 618,308 631,347 655,398 669,428',
    '669,636 678,633 707,607 730,560 745,535 764,497',
    '767,230 815,260 870,288 913,307',
    '913,526 962,503 1010,481',
    '1010,261 1054,280 1099,298 1115,318 1134,370 1164,433 1202,493 1256,549',
    '1259,620 1292,598 1314,565 1340,530 1368,509',
    '1366,417 1396,420',
    '1396,511 1431,497 1452,477 1476,448',
    '1474,308 1500,317 1517,337 1543,373 1587,420 1617,442 1643,470 1656,497 1689,540',
    '1689,636 1711,633',
    '1711,526 1854,553'
].forEach(p => curve(p, '#99cc00', 4));
line('127,77 144,203 159,297 180,407 200,517 210,567 220,623 229,650 239,675', '#99cc00', 4, 'stroke-linecap="round" stroke-dasharray="0 6"');

// 봉
const close = [], steps = [];
for (let x = 50; x < 1854; x += 2) {
    const wild = x < 300 ? 60 : x < 620 ? 32 : 26;
    const mid = priceAt(x);
    const a = snap(mid + (rnd() - .5) * wild);
    const b = Math.min(990, a + TICK * (rnd() < .35 ? 0 : Math.ceil(rnd() * (x < 300 ? 4 : 2))) * (a > mid ? -1 : 1));
    const color = rnd() < .6 ? '#e8190c' : '#1159cc';
    if (a !== b) {
        rect(x, Math.round(Math.min(a, b)), rnd() < .2 ? 3 : 1, Math.round(Math.abs(b - a)), color);
    } else {
        rect(x - 1, a, 4, 1, color);
    }
    steps.push(`${x},${snap(mid)} ${x + 2},${snap(mid)}`);
    close.push(`${x},${Math.round((a + mid) / 2)}`);
}
line(steps.join(' '), '#e8190c', 1);
line(close.join(' '), '#0000dd', 1);
rect(49, 77, 2, 110, '#e8190c');
rect(51, 77, 2, 250, '#0000ff');
rect(50, 190, 3, 200, '#1159cc');
rect(53, 300, 3, 180, '#e8190c');
rect(587, 292, 1, 80, '#1159cc');
rect(716, 232, 1, 90, '#1159cc');
rect(707, 278, 1, 70, '#e8190c');
rect(916, 261, 1, 60, '#e8190c');
rect(915, 293, 4, 50, '#e8190c');
rect(911, 340, 4, 30, '#e8190c');
rect(1404, 371, 4, 30, '#e8190c');
rect(1711, 560, 1, 169, '#1159cc');
rect(1716, 650, 4, 48, '#1159cc');
rect(295, 930, 2, 64, '#1159cc');
rect(192, 800, 1, 85, '#1159cc');
area('587,364 591,369 589,369 589,373 585,373 585,369 583,369', '#800080');

// 볼린저
curve('89,77 98,190 110,283 122,410 130,463 141,567 153,640 167,747 180,833 192,913 206,1003 215,1037', '#00ff00', 5);
curve('402,77 408,153 413,230 417,317 421,400 424,477 433,512 443,517 455,515 465,509 473,515 486,531 496,533 504,543 518,549 531,530 551,497 571,463 588,433 604,410 616,402 631,399 646,387 663,382 682,380 701,363 720,335 730,326 747,323 764,330 781,341 810,344 861,343 878,348 892,359 909,358 924,345 958,341 970,343 983,336 993,336 1008,347 1052,349 1061,353 1080,354 1099,369 1111,370 1130,357 1164,351 1214,345 1244,349 1279,353 1296,370 1318,375 1344,381 1361,394 1377,398 1400,394 1418,390 1435,383 1448,368 1461,350 1483,340 1517,337 1543,331 1561,330 1587,337 1613,348 1639,351 1656,340 1674,332 1691,330 1713,333 1734,327 1756,327 1778,333 1799,350 1817,367 1832,390 1845,413 1854,422', '#00ff00', 5);
curve('416,1037 420,960 425,897 433,882 469,881 486,872 506,866 520,864 535,876 559,892 580,895 592,901 602,902 621,897 642,890 655,870 669,847 678,820 690,798 711,783 726,770 751,725 768,687 794,643 823,613 865,583 880,570 884,563 892,545 916,544 926,547 945,544 981,544 993,535 1008,517 1046,500 1063,501 1080,505 1099,505 1111,513 1126,533 1151,552 1189,585 1219,610 1256,632 1262,634 1288,634 1301,629 1348,627 1370,622 1413,623 1435,628 1470,641 1491,636 1504,627 1522,622 1548,607 1578,583 1600,560 1615,547 1635,543 1643,550 1665,580 1691,603 1713,612 1730,637 1760,662 1791,678 1821,693 1834,693 1845,690 1854,689', '#00ff00', 5);
curve('151,77 165,153 184,257 208,390 228,493 247,568 265,643 286,733 312,860 333,927 355,1007 365,1037', '#ff00ff', 6);
curve('862,77 876,183 886,263 894,327 901,333 909,332 924,320 945,313 966,310 987,301 1021,295 1054,284 1088,280 1113,279 1134,288 1160,307 1181,314 1206,324 1235,337 1262,349 1292,352 1314,349 1344,349 1366,352 1396,352 1413,349 1439,345 1457,340 1474,334 1522,333 1550,337 1570,344 1587,347 1643,347 1674,343 1713,346 1730,342 1756,343 1773,352 1812,357 1834,363 1854,366', '#ff00ff', 7);
curve('845,1037 856,1007 863,970 873,927 884,883 890,843 895,819 909,818 926,820 937,816 970,816 996,817 1021,812 1038,807 1054,798 1088,784 1111,775 1122,763 1137,745 1151,720 1166,705 1181,697 1202,677 1219,667 1240,647 1262,630 1283,618 1348,599 1361,590 1413,590 1435,591 1461,592 1478,585 1509,583 1543,583 1570,582 1613,582 1639,587 1674,605 1691,612 1713,615 1730,627 1752,636 1769,638 1799,647 1821,657 1838,663 1854,664', '#ff00ff', 5);

// 파라볼릭 SAR
line('59,122 60,195 61,313 63,433 67,527 77,560', '#0000ff', 4, 'stroke-linecap="round" stroke-dasharray="0 40"');
[
    '109,433 120,503 122,520', '131,465 137,505 141,550',
    '148,511 155,540 160,590', '168,542 172,567 180,610 186,640', '192,635 204,697', '221,635 236,692',
    '247,604 252,640 264,693 268,760 279,855', '291,838 298,910', '346,720 352,745 357,775', '371,727 386,760',
    '426,588 437,625', '455,542 470,590', '496,558 513,635', '530,433 540,445',
    '596,292 602,340 608,400 612,460 616,510 619,560 624,600', '655,462 668,475', '684,323 704,370',
    '718,229 722,255 729,310 738,390 745,420', '747,400 758,450 766,455', '767,440 780,462',
    '797,401 805,420 815,450', '831,417 838,427', '864,417 876,435 884,458', '919,261 926,300 935,370 941,402',
    '954,385 967,397', '980,340 987,360 996,410 1010,440 1017,450', '1033,370 1054,393 1062,420 1070,455',
    '1082,447 1092,460', '1093,433 1105,475 1112,510 1117,560 1125,605', '1155,557 1175,567', '1193,557 1222,590',
    '1302,417 1317,432', '1319,417 1332,433', '1357,433 1365,460', '1402,369 1412,369', '1441,308 1448,325',
    '1464,323 1475,345 1483,400 1500,430 1514,480', '1493,370 1504,405 1510,440', '1535,401 1550,423',
    '1562,416 1570,450 1578,470', '1602,447 1613,460 1622,530', '1634,525 1641,545 1652,590 1668,620',
    '1682,573 1690,580', '1706,526 1715,555 1722,610 1728,640', '1750,588 1760,595', '1776,588 1782,592',
    '1789,587 1805,620 1818,645'
].forEach(p => dots(p, '#0000ff', 1));
line('98,562 101,500 108,470', '#ff0000', 4, 'stroke-linecap="round" stroke-dasharray="0 9"');
line('98,560 93,650 90,730 88,750', '#ff0000', 4, 'stroke-linecap="round" stroke-dasharray="0 12"');
[
    '72,693 76,672', '120,620 128,570', '140,618 147,590',
    '206,881 213,790 220,730', '236,760 241,720 247,680', '285,897 290,888',
    '301,990 308,950 313,890 316,840 319,800 322,740', '357,807 372,773', '386,823 400,770 408,740 425,670',
    '437,697 448,650 454,600', '470,637 496,600', '513,683 518,640 522,560 524,510 527,450', '543,495 555,467',
    '561,495 577,475', '586,495 594,460', '620,636 630,618 636,570', '642,547 650,530', '669,510 680,470',
    '704,448 709,400 714,350', '742,480 746,465', '758,512 768,495', '780,526 786,500 789,465', '814,480 825,466',
    '839,480 848,465', '852,480 862,465', '883,495 897,470 905,430 911,390 915,350', '945,430 965,430',
    '970,425 979,390', '1018,495 1025,460 1030,430', '1072,495 1083,478', '1127,620 1140,595 1150,582',
    '1152,590 1165,583', '1182,604 1192,603', '1222,620 1230,612', '1240,620 1260,598 1265,550 1272,510 1278,480',
    '1292,495 1300,465', '1333,480 1340,470', '1342,480 1356,470', '1371,512 1380,490 1387,460 1402,430',
    '1415,417 1420,405', '1421,417 1434,398 1440,380', '1452,385 1465,369', '1484,464 1492,440',
    '1516,543 1523,500 1530,450 1538,430', '1553,510 1561,492', '1578,512 1588,495 1602,473', '1625,573 1637,567',
    '1661,636 1670,635', '1687,620 1695,580 1708,555', '1729,729 1733,720 1740,660 1748,630', '1759,650 1777,630',
    '1779,636 1789,627', '1818,667 1823,664', '1830,668 1842,630 1852,595'
].forEach(p => dots(p, '#ff0000', 1));

// 당일시가, 십자선, 우측 경계
rect(49, 196, 1814, 7, '#00ff00');
rect(49, 770, 1814, 1, '#ff0000');
rect(1412, 77, 1, 960, '#ff0000');
rect(1862, 77, 3, 960, '#1159cc');

plot.innerHTML = out;
```
